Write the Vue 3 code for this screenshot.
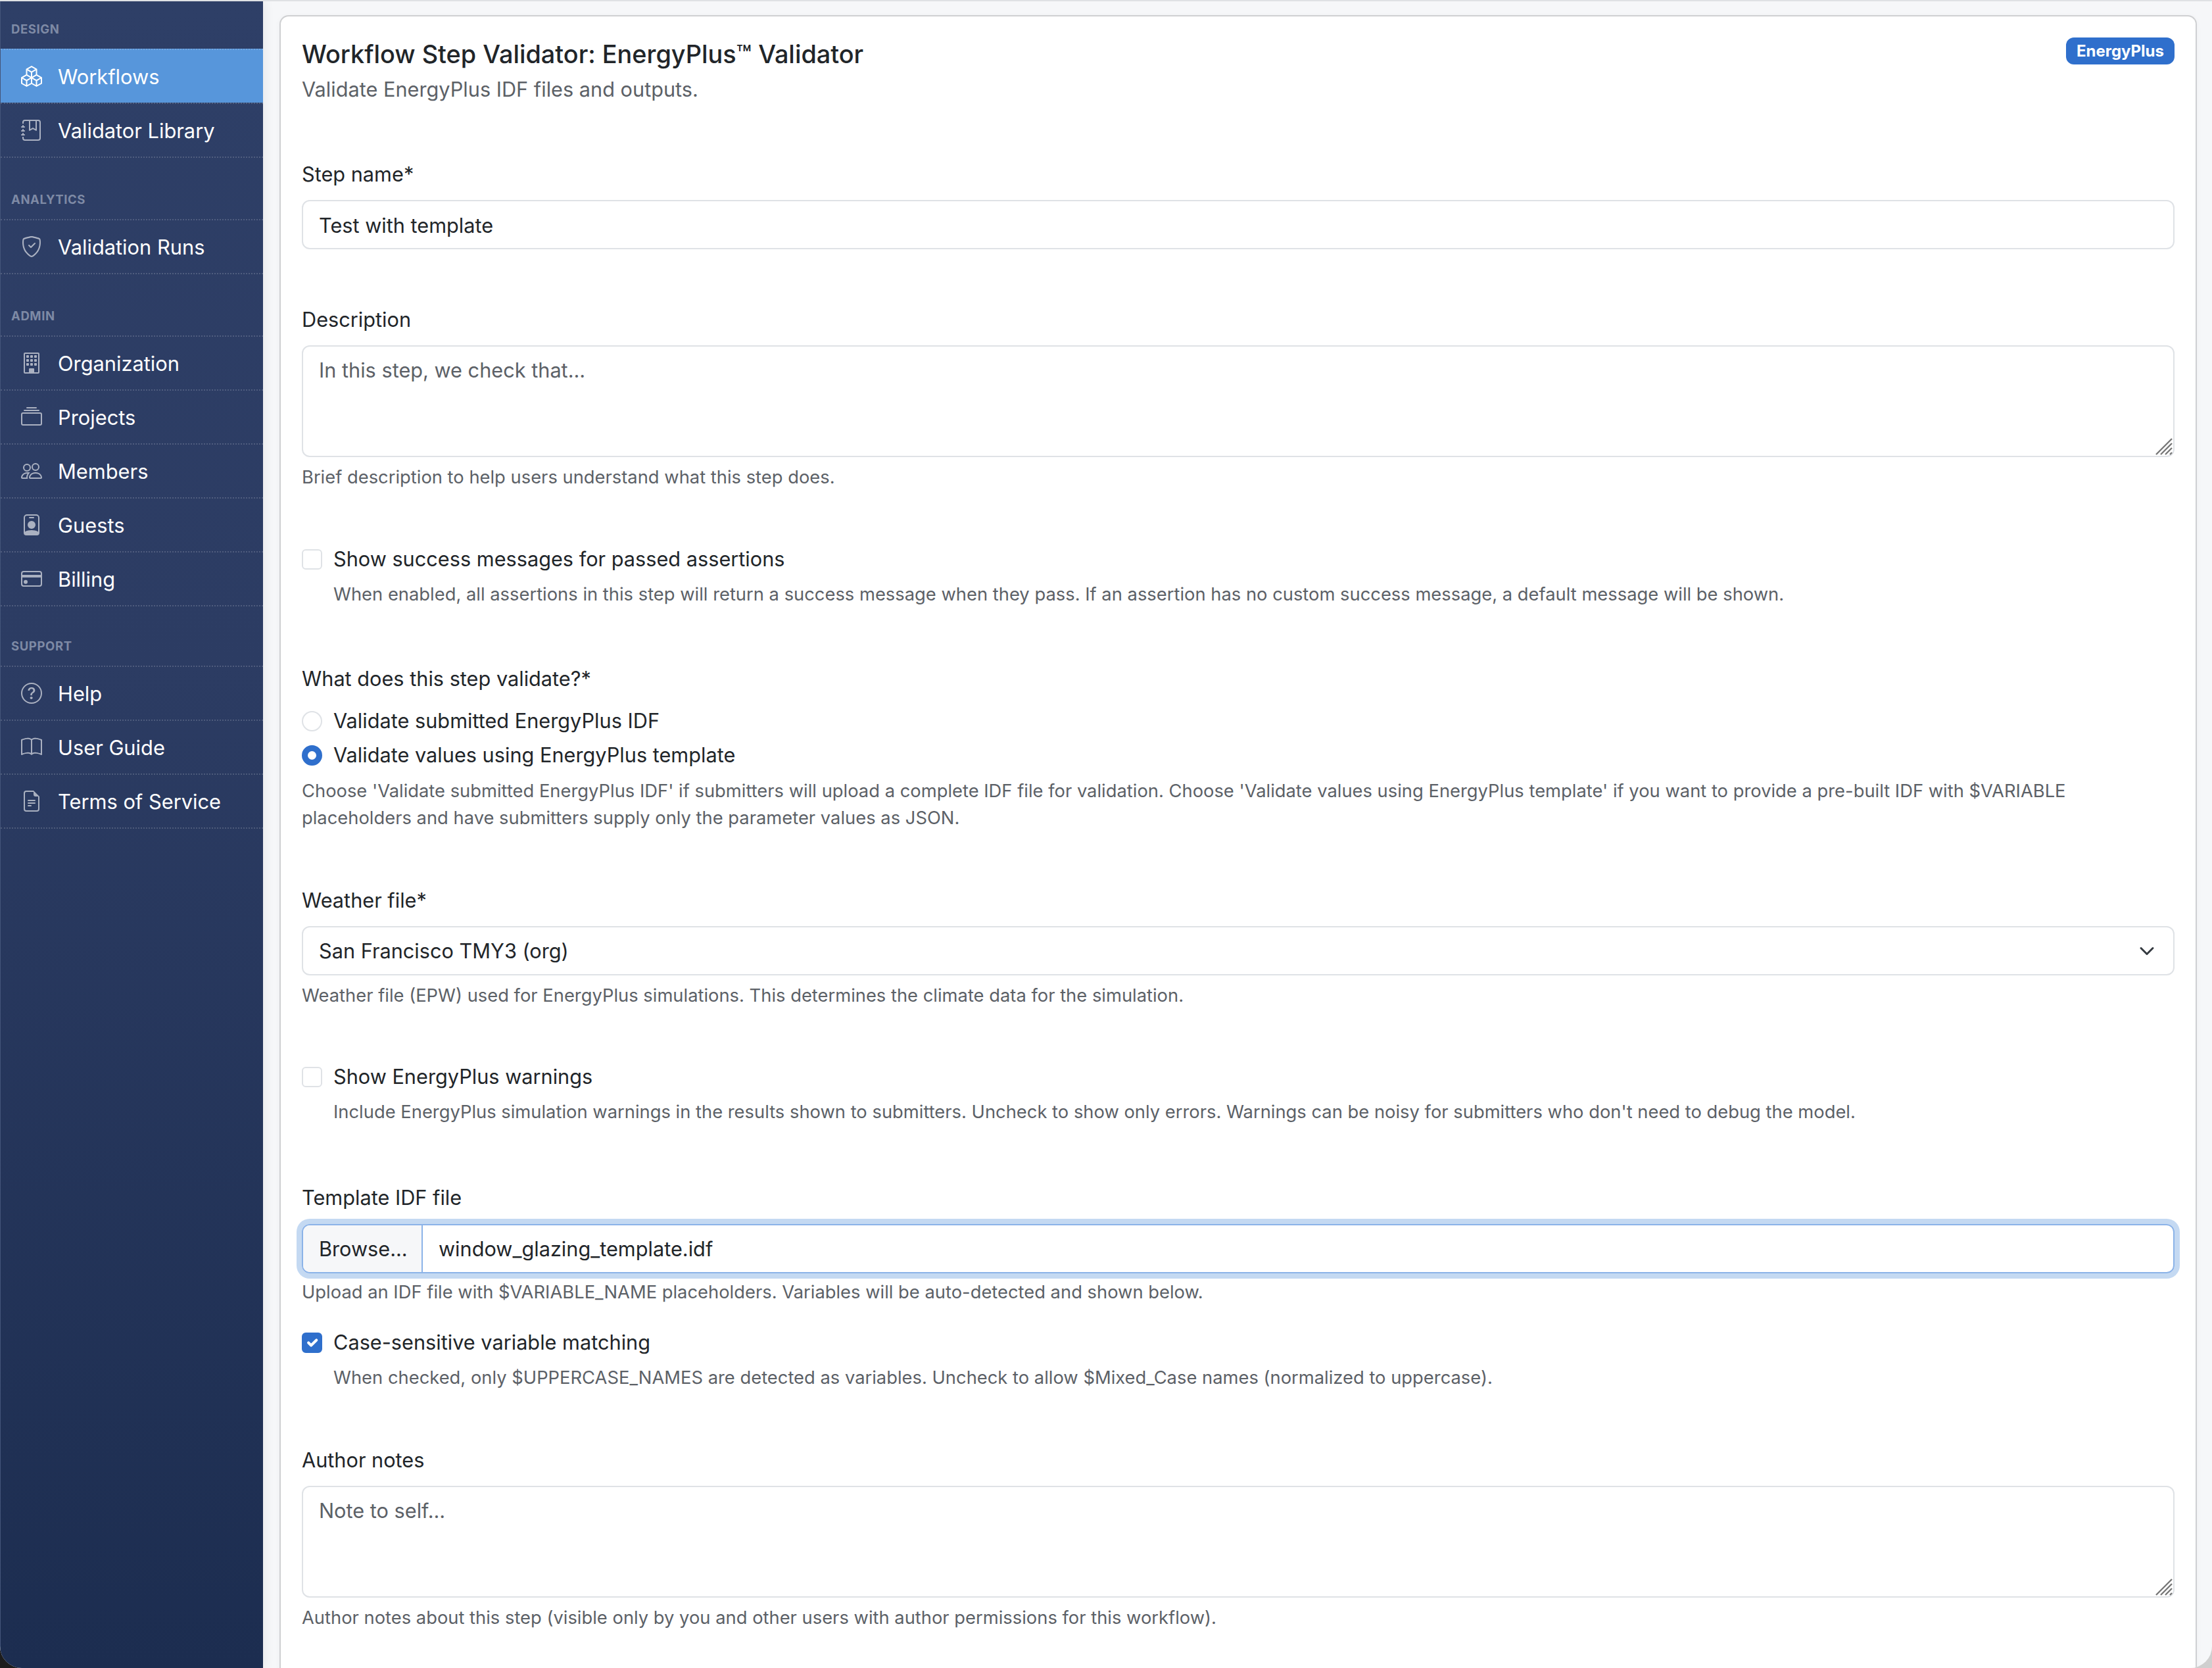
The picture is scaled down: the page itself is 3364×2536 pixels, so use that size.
<script setup>
const groups = [
  { title: 'DESIGN', items: [
    { label: 'Workflows', icon: 'boxes', active: true },
    { label: 'Validator Library', icon: 'journal' },
  ]},
  { title: 'ANALYTICS', items: [{ label: 'Validation Runs', icon: 'shield' }] },
  { title: 'ADMIN', items: [
    { label: 'Organization', icon: 'building' },
    { label: 'Projects', icon: 'collection' },
    { label: 'Members', icon: 'people' },
    { label: 'Guests', icon: 'badge' },
    { label: 'Billing', icon: 'card' },
  ]},
  { title: 'SUPPORT', items: [
    { label: 'Help', icon: 'question' },
    { label: 'User Guide', icon: 'book' },
    { label: 'Terms of Service', icon: 'file' },
  ]},
]
const icons = {
  boxes: ['M7.752.066a.5.5 0 0 1 .496 0l3.75 2.143a.5.5 0 0 1 .252.434v3.995l3.498 2A.5.5 0 0 1 16 9.07v4.286a.5.5 0 0 1-.252.434l-3.75 2.143a.5.5 0 0 1-.496 0l-3.502-2-3.502 2.001a.5.5 0 0 1-.496 0l-3.75-2.143A.5.5 0 0 1 0 13.357V9.071a.5.5 0 0 1 .252-.434L3.75 6.638V2.643a.5.5 0 0 1 .252-.434zM4.25 7.504 1.508 9.071l2.742 1.567 2.742-1.567zM7.5 9.933l-2.75 1.571v3.134l2.75-1.571zm1 3.134 2.75 1.571v-3.134L8.5 9.933zm.508-3.996 2.742 1.567 2.742-1.567-2.742-1.567zm2.242-2.433V3.504L8.5 5.076V8.21zM7.5 8.21V5.076L4.75 3.504v3.134zM5.258 2.643 8 4.21l2.742-1.567L8 1.076zM15 9.933l-2.75 1.571v3.134L15 13.067zM3.75 14.638v-3.134L1 9.933v3.134z'],
  journal: ['M6 8V1h1v6.117L8.743 6.07a.5.5 0 0 1 .514 0L11 7.117V1h1v7a.5.5 0 0 1-.757.429L9 7.083 6.757 8.43A.5.5 0 0 1 6 8', 'M3 0h10a2 2 0 0 1 2 2v12a2 2 0 0 1-2 2H3a2 2 0 0 1-2-2v-1h1v1a1 1 0 0 0 1 1h10a1 1 0 0 0 1-1V2a1 1 0 0 0-1-1H3a1 1 0 0 0-1 1v1H1V2a2 2 0 0 1 2-2', 'M1 5v-.5a.5.5 0 0 1 1 0V5h.5a.5.5 0 0 1 0 1h-2a.5.5 0 0 1 0-1zm0 3v-.5a.5.5 0 0 1 1 0V8h.5a.5.5 0 0 1 0 1h-2a.5.5 0 0 1 0-1zm0 3v-.5a.5.5 0 0 1 1 0v.5h.5a.5.5 0 0 1 0 1h-2a.5.5 0 0 1 0-1z'],
  shield: ['M5.338 1.59a61 61 0 0 0-2.837.856.48.48 0 0 0-.328.39c-.554 4.157.726 7.19 2.253 9.188a10.7 10.7 0 0 0 2.287 2.233c.346.244.652.42.893.533q.18.085.293.118a1 1 0 0 0 .101.025 1 1 0 0 0 .1-.025q.114-.034.294-.118c.24-.113.547-.29.893-.533a10.7 10.7 0 0 0 2.287-2.233c1.527-1.997 2.807-5.031 2.253-9.188a.48.48 0 0 0-.328-.39c-.651-.213-1.75-.56-2.837-.855C9.552 1.29 8.531 1.067 8 1.067c-.53 0-1.552.223-2.662.524zM5.072.56C6.157.265 7.31 0 8 0s1.843.265 2.928.56c1.11.3 2.229.655 2.887.87a1.54 1.54 0 0 1 1.044 1.262c.596 4.477-.787 7.795-2.465 9.99a11.8 11.8 0 0 1-2.517 2.453 7 7 0 0 1-1.048.625c-.28.132-.581.24-.829.24s-.548-.108-.829-.24a7 7 0 0 1-1.048-.625 11.8 11.8 0 0 1-2.517-2.453C1.928 10.487.545 7.169 1.141 2.692A1.54 1.54 0 0 1 2.185 1.43 63 63 0 0 1 5.072.56', 'M10.854 5.146a.5.5 0 0 1 0 .708l-3 3a.5.5 0 0 1-.708 0l-1.5-1.5a.5.5 0 1 1 .708-.708L7.5 7.793l2.646-2.647a.5.5 0 0 1 .708 0'],
  building: ['M4 2.5a.5.5 0 0 1 .5-.5h1a.5.5 0 0 1 .5.5v1a.5.5 0 0 1-.5.5h-1a.5.5 0 0 1-.5-.5zm3 0a.5.5 0 0 1 .5-.5h1a.5.5 0 0 1 .5.5v1a.5.5 0 0 1-.5.5h-1a.5.5 0 0 1-.5-.5zm3.5-.5a.5.5 0 0 0-.5.5v1a.5.5 0 0 0 .5.5h1a.5.5 0 0 0 .5-.5v-1a.5.5 0 0 0-.5-.5zM4 5.5a.5.5 0 0 1 .5-.5h1a.5.5 0 0 1 .5.5v1a.5.5 0 0 1-.5.5h-1a.5.5 0 0 1-.5-.5zM7.5 5a.5.5 0 0 0-.5.5v1a.5.5 0 0 0 .5.5h1a.5.5 0 0 0 .5-.5v-1a.5.5 0 0 0-.5-.5zm2.5.5a.5.5 0 0 1 .5-.5h1a.5.5 0 0 1 .5.5v1a.5.5 0 0 1-.5.5h-1a.5.5 0 0 1-.5-.5zM4.5 8a.5.5 0 0 0-.5.5v1a.5.5 0 0 0 .5.5h1a.5.5 0 0 0 .5-.5v-1a.5.5 0 0 0-.5-.5zm2.5.5a.5.5 0 0 1 .5-.5h1a.5.5 0 0 1 .5.5v1a.5.5 0 0 1-.5.5h-1a.5.5 0 0 1-.5-.5zm3.5-.5a.5.5 0 0 0-.5.5v1a.5.5 0 0 0 .5.5h1a.5.5 0 0 0 .5-.5v-1a.5.5 0 0 0-.5-.5z', 'M2 1a1 1 0 0 1 1-1h10a1 1 0 0 1 1 1v14a1 1 0 0 1-1 1H3a1 1 0 0 1-1-1zm11 0H3v14h3v-2.5a.5.5 0 0 1 .5-.5h3a.5.5 0 0 1 .5.5V15h3z'],
  collection: ['M2.5 3.5a.5.5 0 0 1 0-1h11a.5.5 0 0 1 0 1zm2-2a.5.5 0 0 1 0-1h7a.5.5 0 0 1 0 1zM0 13a1.5 1.5 0 0 0 1.5 1.5h13A1.5 1.5 0 0 0 16 13V6a1.5 1.5 0 0 0-1.5-1.5h-13A1.5 1.5 0 0 0 0 6zm1.5.5A.5.5 0 0 1 1 13V6a.5.5 0 0 1 .5-.5h13a.5.5 0 0 1 .5.5v7a.5.5 0 0 1-.5.5z'],
  people: ['M15 14s1 0 1-1-1-4-5-4-5 3-5 4 1 1 1 1zm-7.978-1L7 12.996c.001-.264.167-1.03.76-1.72C8.312 10.629 9.282 10 11 10c1.717 0 2.687.63 3.24 1.276.593.69.758 1.457.76 1.72l-.008.002-.014.002zM11 7a2 2 0 1 0 0-4 2 2 0 0 0 0 4m3-2a3 3 0 1 1-6 0 3 3 0 0 1 6 0M6.936 9.28a6 6 0 0 0-1.23-.247A7 7 0 0 0 5 9c-4 0-5 3-5 4q0 1 1 1h4.216A2.24 2.24 0 0 1 5 13c0-1.01.377-2.042 1.09-2.904.243-.294.526-.569.846-.816M4.92 10A5.5 5.5 0 0 0 4 13H1c0-.26.164-1.03.76-1.724.545-.636 1.492-1.256 3.16-1.275ZM1.5 5.5a3 3 0 1 1 6 0 3 3 0 0 1-6 0m3-2a2 2 0 1 0 0 4 2 2 0 0 0 0-4'],
  badge: ['M6.5 2a.5.5 0 0 0 0 1h3a.5.5 0 0 0 0-1zM11 8a3 3 0 1 1-6 0 3 3 0 0 1 6 0', 'M4.5 0A2.5 2.5 0 0 0 2 2.5V14a2 2 0 0 0 2 2h8a2 2 0 0 0 2-2V2.5A2.5 2.5 0 0 0 11.5 0zM3 2.5A1.5 1.5 0 0 1 4.5 1h7A1.5 1.5 0 0 1 13 2.5v10.795a4.2 4.2 0 0 0-.776-.492C11.392 12.387 10.063 12 8 12s-3.392.387-4.224.803a4.2 4.2 0 0 0-.776.492z'],
  card: ['M0 4a2 2 0 0 1 2-2h12a2 2 0 0 1 2 2v8a2 2 0 0 1-2 2H2a2 2 0 0 1-2-2zm2-1a1 1 0 0 0-1 1v1h14V4a1 1 0 0 0-1-1zm13 4H1v5a1 1 0 0 0 1 1h12a1 1 0 0 0 1-1z', 'M5 10.4a1.5 1.5 0 1 1-3 0 1.5 1.5 0 0 1 3 0'],
  question: ['M8 15A7 7 0 1 1 8 1a7 7 0 0 1 0 14m0 1A8 8 0 1 0 8 0a8 8 0 0 0 0 16', 'M5.255 5.786a.237.237 0 0 0 .241.247h.825c.138 0 .248-.113.266-.25.09-.656.54-1.134 1.342-1.134.686 0 1.314.343 1.314 1.168 0 .635-.374.927-.965 1.371-.673.489-1.206 1.06-1.168 1.987l.003.217a.25.25 0 0 0 .25.246h.811a.25.25 0 0 0 .25-.25v-.105c0-.718.273-.927 1.01-1.486.609-.463 1.244-.977 1.244-2.056 0-1.511-1.276-2.241-2.673-2.241-1.267 0-2.655.59-2.75 2.286m1.557 5.763c0 .533.425.927 1.01.927.609 0 1.028-.394 1.028-.927 0-.552-.42-.94-1.029-.94-.584 0-1.009.388-1.009.94'],
  book: ['M1 2.828c.885-.37 2.154-.769 3.388-.893 1.33-.134 2.458.063 3.112.752v9.746c-.935-.53-2.12-.603-3.213-.493-1.18.12-2.37.461-3.287.811zm7.5-.141c.654-.689 1.782-.886 3.112-.752 1.234.124 2.503.523 3.388.893v9.923c-.918-.35-2.107-.692-3.287-.81-1.094-.111-2.278-.039-3.213.492zM8 1.783C7.015.936 5.587.81 4.287.94c-1.514.153-3.042.672-3.994 1.105A.5.5 0 0 0 0 2.5v11a.5.5 0 0 0 .707.455c.882-.4 2.303-.881 3.68-1.02 1.409-.142 2.59.087 3.223.877a.5.5 0 0 0 .78 0c.633-.79 1.814-1.019 3.222-.877 1.378.139 2.8.62 3.681 1.02A.5.5 0 0 0 16 13.5v-11a.5.5 0 0 0-.293-.455c-.952-.433-2.48-.952-3.994-1.105C10.413.809 8.985.936 8 1.783'],
  file: ['M5.5 7a.5.5 0 0 0 0 1h5a.5.5 0 0 0 0-1zM5 9.5a.5.5 0 0 1 .5-.5h5a.5.5 0 0 1 0 1h-5a.5.5 0 0 1-.5-.5m0 2a.5.5 0 0 1 .5-.5h2a.5.5 0 0 1 0 1h-2a.5.5 0 0 1-.5-.5', 'M9.5 0H4a2 2 0 0 0-2 2v12a2 2 0 0 0 2 2h8a2 2 0 0 0 2-2V4.5zm0 1v2A1.5 1.5 0 0 0 11 4.5h2V14a1 1 0 0 1-1 1H4a1 1 0 0 1-1-1V2a1 1 0 0 1 1-1z'],
}
</script>

<template>
  <div class="window">
    <aside class="sidebar">
      <section v-for="g in groups" :key="g.title" class="group">
        <div class="group-title">{{ g.title }}</div>
        <a v-for="item in g.items" :key="item.label" class="nav-item" :class="{ active: item.active }">
          <svg class="nav-icon" viewBox="0 0 16 16" fill="currentColor">
            <path v-for="d in icons[item.icon]" :key="d" :d="d" />
          </svg>
          <span class="nav-label">{{ item.label }}</span>
        </a>
      </section>
    </aside>

    <main class="main">
      <div class="card">
        <header class="head">
          <div>
            <h1 class="title">Workflow Step Validator: EnergyPlus™ Validator</h1>
            <p class="subtitle">Validate EnergyPlus IDF files and outputs.</p>
          </div>
          <span class="pill">EnergyPlus</span>
        </header>

        <div class="field f-name">
          <label class="label">Step name*</label>
          <div class="control">Test with template</div>
        </div>

        <div class="field f-desc">
          <label class="label">Description</label>
          <div class="control area placeholder">
            In this step, we check that...
            <svg class="grip" viewBox="0 0 26 26" stroke="#777" stroke-width="2.4" fill="none"><path d="M1 25 25 1M8 25 25 8M15 25 25 15M22 25l3-3" /></svg>
          </div>
          <div class="help">Brief description to help users understand what this step does.</div>
        </div>

        <div class="check f-success">
          <span class="box"></span>
          <div>
            <div class="check-label">Show success messages for passed assertions</div>
            <div class="check-help">When enabled, all assertions in this step will return a success message when they pass. If an assertion has no custom success message, a default message will be shown.</div>
          </div>
        </div>

        <div class="field f-what">
          <label class="label">What does this step validate?*</label>
          <div class="radio"><span class="dot"></span>Validate submitted EnergyPlus IDF</div>
          <div class="radio"><span class="dot on"></span>Validate values using EnergyPlus template</div>
          <div class="help tight">Choose 'Validate submitted EnergyPlus IDF' if submitters will upload a complete IDF file for validation. Choose 'Validate values using EnergyPlus template' if you want to provide a pre-built IDF with $VARIABLE placeholders and have submitters supply only the parameter values as JSON.</div>
        </div>

        <div class="field f-weather">
          <label class="label">Weather file*</label>
          <div class="control select">
            San Francisco TMY3 (org)
            <svg class="chev" viewBox="0 0 16 16" fill="none" stroke="#343a40" stroke-width="2" stroke-linecap="round" stroke-linejoin="round"><path d="m2 5 6 6 6-6" /></svg>
          </div>
          <div class="help">Weather file (EPW) used for EnergyPlus simulations. This determines the climate data for the simulation.</div>
        </div>

        <div class="check f-warn">
          <span class="box"></span>
          <div>
            <div class="check-label">Show EnergyPlus warnings</div>
            <div class="check-help">Include EnergyPlus simulation warnings in the results shown to submitters. Uncheck to show only errors. Warnings can be noisy for submitters who don't need to debug the model.</div>
          </div>
        </div>

        <div class="field f-template">
          <label class="label">Template IDF file</label>
          <div class="file">
            <span class="browse">Browse...</span>
            <span class="fname">window_glazing_template.idf</span>
          </div>
          <div class="help tight">Upload an IDF file with $VARIABLE_NAME placeholders. Variables will be auto-detected and shown below.</div>
        </div>

        <div class="check f-case">
          <span class="box on">
            <svg viewBox="0 0 20 20" fill="none" stroke="#fff" stroke-width="3" stroke-linecap="round" stroke-linejoin="round"><path d="m6 10 3 3 6-6" /></svg>
          </span>
          <div>
            <div class="check-label">Case-sensitive variable matching</div>
            <div class="check-help">When checked, only $UPPERCASE_NAMES are detected as variables. Uncheck to allow $Mixed_Case names (normalized to uppercase).</div>
          </div>
        </div>

        <div class="field f-notes">
          <label class="label">Author notes</label>
          <div class="control area placeholder">
            Note to self...
            <svg class="grip" viewBox="0 0 26 26" stroke="#777" stroke-width="2.4" fill="none"><path d="M1 25 25 1M8 25 25 8M15 25 25 15M22 25l3-3" /></svg>
          </div>
          <div class="help">Author notes about this step (visible only by you and other users with author permissions for this workflow).</div>
        </div>
      </div>
    </main>
  </div>
</template>

<style>
html, body { margin: 0; background: linear-gradient(90deg, #1c1c1c 50%, #cfcfcf 50%); }
</style>

<style scoped>
.window {
  display: flex;
  width: 3364px;
  height: 2536px;
  overflow: hidden;
  box-sizing: border-box;
  border-top: 2px solid #dfe1e4;
  border-radius: 0 0 33px 33px;
  background: #f6f7f9;
  font-family: Inter, "Liberation Sans", sans-serif;
  color: #212529;
  font-size: 30.7px;
  line-height: 48px;
}
.sidebar {
  flex: 0 0 400px;
  box-sizing: border-box;
  background: linear-gradient(180deg, #2e3f67 0%, #2c3c63 40%, #1c2d50 100%);
  box-shadow: 4px 0 14px rgba(0, 0, 0, 0.06);
  border-left: 1px solid #44557a;
  position: relative;
}
.group-title {
  height: 72px;
  box-sizing: border-box;
  padding: 28px 0 0 16px;
  font-size: 18.5px;
  line-height: 28px;
  font-weight: 700;
  letter-spacing: 0.6px;
  color: #7e8aa5;
}
.group:nth-child(2) { margin-top: 21px; }
.group:nth-child(3) { margin-top: 21px; }
.group:nth-child(4) { margin-top: 18px; }
.nav-item {
  display: flex;
  align-items: center;
  gap: 24px;
  height: 82px;
  box-sizing: border-box;
  padding-left: 31px;
  color: #fff;
  border-top: 2px dotted rgba(255, 255, 255, 0.17);
}
.group .nav-item:last-child { height: 84px; border-bottom: 2px dotted rgba(255, 255, 255, 0.17); }
.nav-item.active { background: #5796db; }
.nav-icon { width: 32px; height: 32px; color: rgba(255, 255, 255, 0.6); flex: none; }
.active .nav-icon { color: #fff; }
.nav-label { padding-top: 2px; font-size: 30.8px; }

.main { flex: 1; padding: 21px 23px 0 25px; min-width: 0; }
.card {
  height: 100%;
  box-sizing: border-box;
  background: #fff;
  border: 2px solid #cfd0d2;
  border-bottom: none;
  border-radius: 14px 14px 0 0;
  padding: 27px 32px 0 32px;
  box-shadow: 0 2px 8px rgba(0, 0, 0, 0.04);
}
.head { display: flex; justify-content: space-between; align-items: flex-start; }
.title { margin: 0; font-size: 37.8px; line-height: 60px; font-weight: 500; }
.subtitle { margin: 0; color: #5c6167; line-height: 48px; }
.pill {
  margin-top: 5px;
  background: #2f6fcc;
  color: #fff;
  font-size: 24px;
  line-height: 41px;
  font-weight: 700;
  padding: 0 16px;
  border-radius: 12px;
}
.label { display: block; line-height: 48px; }
.control {
  position: relative;
  box-sizing: border-box;
  height: 75px;
  margin-top: 15px;
  padding: 13px 24px;
  border: 2px solid #dfe2e6;
  border-radius: 12px;
  background: #fff;
}
.area { height: 170px; padding-top: 12px; }
.placeholder { color: #5c6167; }
.grip { position: absolute; right: 1px; bottom: 1px; width: 26px; height: 26px; }
.select { display: flex; justify-content: space-between; align-items: center; padding: 0 24px; }
.chev { width: 24px; height: 24px; margin-right: 4px; }
.help { margin-top: 10px; color: #5c6167; font-size: 27.35px; line-height: 41px; }
.tight { margin-top: 8px; }

.f-name { margin-top: 81px; }
.f-desc { margin-top: 83px; }
.f-success { margin-top: 80px; }
.f-what { margin-top: 84px; }
.f-weather { margin-top: 81px; }
.f-warn { margin-top: 79px; }
.f-template { margin-top: 86px; }
.f-case { margin-top: 32px; }
.f-notes { margin-top: 81px; }

.check { display: flex; gap: 17px; }
.box {
  flex: none;
  box-sizing: border-box;
  width: 31px;
  height: 31px;
  margin-top: 9px;
  border: 2px solid #dfe2e6;
  border-radius: 6px;
  background: #fff;
}
.box.on { background: #2f6fcc; border-color: #2f6fcc; }
.box.on svg { display: block; width: 100%; height: 100%; }
.check-help { margin-top: 9px; color: #5c6167; font-size: 27.35px; line-height: 41px; }

.radio { display: flex; align-items: center; gap: 17px; line-height: 52px; }
.dot {
  flex: none;
  box-sizing: border-box;
  width: 31px;
  height: 31px;
  border: 2px solid #dfe2e6;
  border-radius: 50%;
  background: #fff;
}
.dot.on { border: 9.5px solid #2f6fcc; }
.f-what .label { margin-bottom: 14px; }

.file {
  display: flex;
  height: 75px;
  box-sizing: border-box;
  margin-top: 16px;
  border: 2px solid #8bb3e8;
  border-radius: 12px;
  box-shadow: 0 0 0 8px #c4d9f2;
  overflow: hidden;
}
.browse {
  width: 182px;
  box-sizing: border-box;
  padding: 12px 0 0 24px;
  background: #f6f7f9;
  border-right: 2px solid #8bb3e8;
}
.fname { padding: 12px 24px; }
</style>
